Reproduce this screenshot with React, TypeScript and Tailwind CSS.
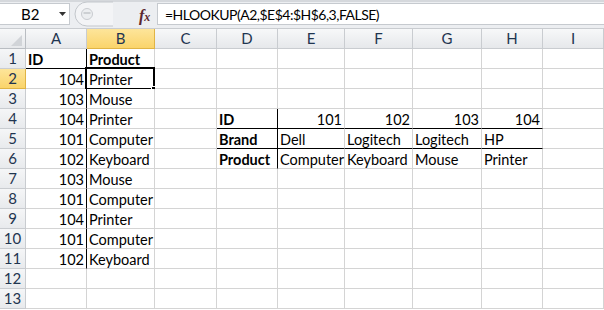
import React from "react";

const COLS = [
  { key: "A", w: 61 },
  { key: "B", w: 68 },
  { key: "C", w: 62 },
  { key: "D", w: 61 },
  { key: "E", w: 67 },
  { key: "F", w: 68 },
  { key: "G", w: 69 },
  { key: "H", w: 61 },
  { key: "I", w: 61 },
];

type Cell = { v: string; bold?: boolean; right?: boolean };

const DATA: Record<string, Cell> = {
  A1: { v: "ID", bold: true },
  B1: { v: "Product", bold: true },
  A2: { v: "104", right: true },
  B2: { v: "Printer" },
  A3: { v: "103", right: true },
  B3: { v: "Mouse" },
  A4: { v: "104", right: true },
  B4: { v: "Printer" },
  A5: { v: "101", right: true },
  B5: { v: "Computer" },
  A6: { v: "102", right: true },
  B6: { v: "Keyboard" },
  A7: { v: "103", right: true },
  B7: { v: "Mouse" },
  A8: { v: "101", right: true },
  B8: { v: "Computer" },
  A9: { v: "104", right: true },
  B9: { v: "Printer" },
  A10: { v: "101", right: true },
  B10: { v: "Computer" },
  A11: { v: "102", right: true },
  B11: { v: "Keyboard" },
  D4: { v: "ID", bold: true },
  E4: { v: "101", right: true },
  F4: { v: "102", right: true },
  G4: { v: "103", right: true },
  H4: { v: "104", right: true },
  D5: { v: "Brand", bold: true },
  E5: { v: "Dell" },
  F5: { v: "Logitech" },
  G5: { v: "Logitech" },
  H5: { v: "HP" },
  D6: { v: "Product", bold: true },
  E6: { v: "Computer" },
  F6: { v: "Keyboard" },
  G6: { v: "Mouse" },
  H6: { v: "Printer" },
};

const ROWS = Array.from({ length: 13 }, (_, i) => i + 1);

function rightBlack(col: string, row: number) {
  if (col === "A" && row <= 11) return true;
  if (col === "D" && row >= 4 && row <= 6) return true;
  return false;
}

function bottomBlack(col: string, row: number) {
  if (row === 1 && (col === "A" || col === "B")) return true;
  if ((row === 4 || row === 5) && "DEFGH".includes(col)) return true;
  return false;
}

function FormulaBar() {
  return (
    <div className="flex h-[28px] flex-col border-t-2 border-[#d5d8dc] bg-[#eceef1]">
      <div className="mt-px flex h-[22px] items-stretch">
        <div className="relative flex w-[70px] items-center border border-l-0 border-[#c6cacf] bg-white">
          <span className="ml-[21px] text-[15px] text-black">B2</span>
          <svg className="absolute left-[59px] top-[8px]" width="8" height="5" viewBox="0 0 8 5">
            <path d="M0 0 H7 L3.5 4 Z" fill="#333" />
          </svg>
        </div>
        <div className="relative w-[87px]">
          <svg className="absolute left-[3px] top-[-2px]" width="40" height="26" viewBox="0 0 40 26">
            <path d="M40 1 H14 A12 12 0 0 0 14 25 H40" fill="#f3f4f6" stroke="#c3c7cc" />
            <circle cx="14" cy="13" r="5.5" fill="#eceef0" stroke="#c9ccd0" />
            <path d="M10.5 12 H17.5" stroke="#b9bcc0" strokeWidth="1.2" />
          </svg>
          <span className="absolute left-[69px] top-[1px] font-['Liberation_Serif'] text-[16px] font-bold italic text-[#5b2730]">
            f<span className="text-[12px]">x</span>
          </span>
        </div>
        <div className="flex flex-1 items-center border border-r-0 border-[#c6cacf] bg-white pl-[7px]">
          <span className="text-[14px] tracking-[-0.5px] text-black">=HLOOKUP(A2,$E$4:$H$6,3,FALSE)</span>
        </div>
      </div>
    </div>
  );
}

function Grid() {
  const template = `26px ${COLS.map((c) => `${c.w}px`).join(" ")}`;
  return (
    <div className="border-t border-[#c9ccd0]">
      <div className="grid" style={{ gridTemplateColumns: template }}>
        <div className="relative h-[20px] border-b border-r border-[#b9bdc2] bg-gradient-to-b from-[#f7f8f9] to-[#e6e8eb]">
          <svg className="absolute bottom-[2px] right-[3px]" width="11" height="11" viewBox="0 0 11 11">
            <path d="M11 0 V11 H0 Z" fill="#d1d4d8" />
          </svg>
        </div>
        {COLS.map((c) => (
          <div
            key={c.key}
            className={`flex h-[20px] items-center justify-center border-b border-r text-[15px] text-[#1f3550] ${
              c.key === "B"
                ? "border-[#e0b445] bg-gradient-to-b from-[#fde59a] to-[#fad46a]"
                : "border-[#c9ccd0] bg-gradient-to-b from-[#f7f8f9] to-[#e6e8eb]"
            }`}
          >
            {c.key}
          </div>
        ))}
        {ROWS.map((r) => (
          <React.Fragment key={r}>
            <div
              className={`flex h-[20px] items-center justify-center border-b border-r text-[15px] text-[#1f3550] ${
                r === 2
                  ? "border-[#e0b445] bg-gradient-to-b from-[#fde59a] to-[#fad46a]"
                  : "border-[#c9ccd0] bg-gradient-to-b from-[#f5f6f7] to-[#e8eaed]"
              }`}
            >
              {r}
            </div>
            {COLS.map((c) => {
              const id = `${c.key}${r}`;
              const cell = DATA[id];
              const selected = id === "B2";
              return (
                <div
                  key={id}
                  className={`relative flex h-[20px] items-end overflow-visible whitespace-nowrap border-b border-r bg-white px-[2px] text-[14.5px] leading-[16px] text-black ${
                    rightBlack(c.key, r) ? "border-r-black" : "border-r-[#d4d4d4]"
                  } ${bottomBlack(c.key, r) ? "border-b-black" : "border-b-[#d4d4d4]"} ${
                    cell?.right ? "justify-end" : "justify-start"
                  } ${cell?.bold ? "font-bold" : ""}`}
                >
                  {cell?.v}
                  {selected && (
                    <>
                      <div className="pointer-events-none absolute -left-[2px] -top-[2px] bottom-[-2px] right-[-1px] border-2 border-black" />
                      <div className="absolute bottom-[-4px] right-[-3px] h-[6px] w-[6px] border border-white bg-black" />
                    </>
                  )}
                </div>
              );
            })}
          </React.Fragment>
        ))}
      </div>
    </div>
  );
}

export default function App() {
  return (
    <div className="h-[310px] w-[604px] overflow-hidden bg-white font-['Lato','Open_Sans',sans-serif]">
      <FormulaBar />
      <Grid />
    </div>
  );
}
